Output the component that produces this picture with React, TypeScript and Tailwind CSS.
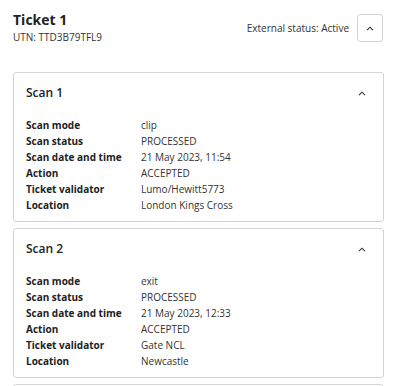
import React from 'react';

type Scan = {
  title: string;
  rows: [string, string][];
};

const scans: Scan[] = [
  {
    title: 'Scan 1',
    rows: [
      ['Scan mode', 'clip'],
      ['Scan status', 'PROCESSED'],
      ['Scan date and time', '21 May 2023, 11:54'],
      ['Action', 'ACCEPTED'],
      ['Ticket validator', 'Lumo/Hewitt5773'],
      ['Location', 'London Kings Cross'],
    ],
  },
  {
    title: 'Scan 2',
    rows: [
      ['Scan mode', 'exit'],
      ['Scan status', 'PROCESSED'],
      ['Scan date and time', '21 May 2023, 12:33'],
      ['Action', 'ACCEPTED'],
      ['Ticket validator', 'Gate NCL'],
      ['Location', 'Newcastle'],
    ],
  },
];

function ChevronUp() {
  return (
    <svg width="8" height="5" viewBox="0 0 8 5" fill="none">
      <path d="M1 4.2L4 1.2L7 4.2" stroke="#333" strokeWidth="1.1" />
    </svg>
  );
}

function ScanCard({ scan }: { scan: Scan }) {
  return (
    <div className="border border-[#d4d4d4] rounded-[3px] bg-white shrink-0">
      <div className="flex items-center justify-between pl-3 pr-[17px] pt-3">
        <h4 className="text-[12px] leading-4 font-semibold text-[#222]">{scan.title}</h4>
        <ChevronUp />
      </div>
      <div className="pl-3 pt-4 pb-2">
        {scan.rows.map(([label, value]) => (
          <div key={label} className="flex text-[10px] leading-4">
            <span className="w-[115px] font-bold text-[#222]">{label}</span>
            <span className="text-[#333]">{value}</span>
          </div>
        ))}
      </div>
    </div>
  );
}

export default function App() {
  return (
    <div
      className="w-[398px] h-[386px] overflow-hidden bg-white pl-[13px] pr-[14px]"
      style={{ fontFamily: '"Open Sans", sans-serif' }}
    >
      <div className="flex items-start justify-between pt-[10px]">
        <div>
          <h3 className="text-[14px] leading-5 font-bold text-[#222]">Ticket 1</h3>
          <p className="text-[10px] leading-[14px] text-[#333]">UTN: TTD3B79TFL9</p>
        </div>
        <div className="flex items-center gap-2 pt-1 pr-px">
          <span className="text-[10px] text-[#333]">External status: Active</span>
          <button className="w-[26px] h-[28px] border border-[#d4d4d4] rounded-[3px] flex items-center justify-center">
            <ChevronUp />
          </button>
        </div>
      </div>
      <div className="flex flex-col gap-[6px] mt-[28px]">
        {scans.map((s) => (
          <ScanCard key={s.title} scan={s} />
        ))}
        <div className="h-10 border border-[#d4d4d4] rounded-[3px] shrink-0" />
      </div>
    </div>
  );
}
